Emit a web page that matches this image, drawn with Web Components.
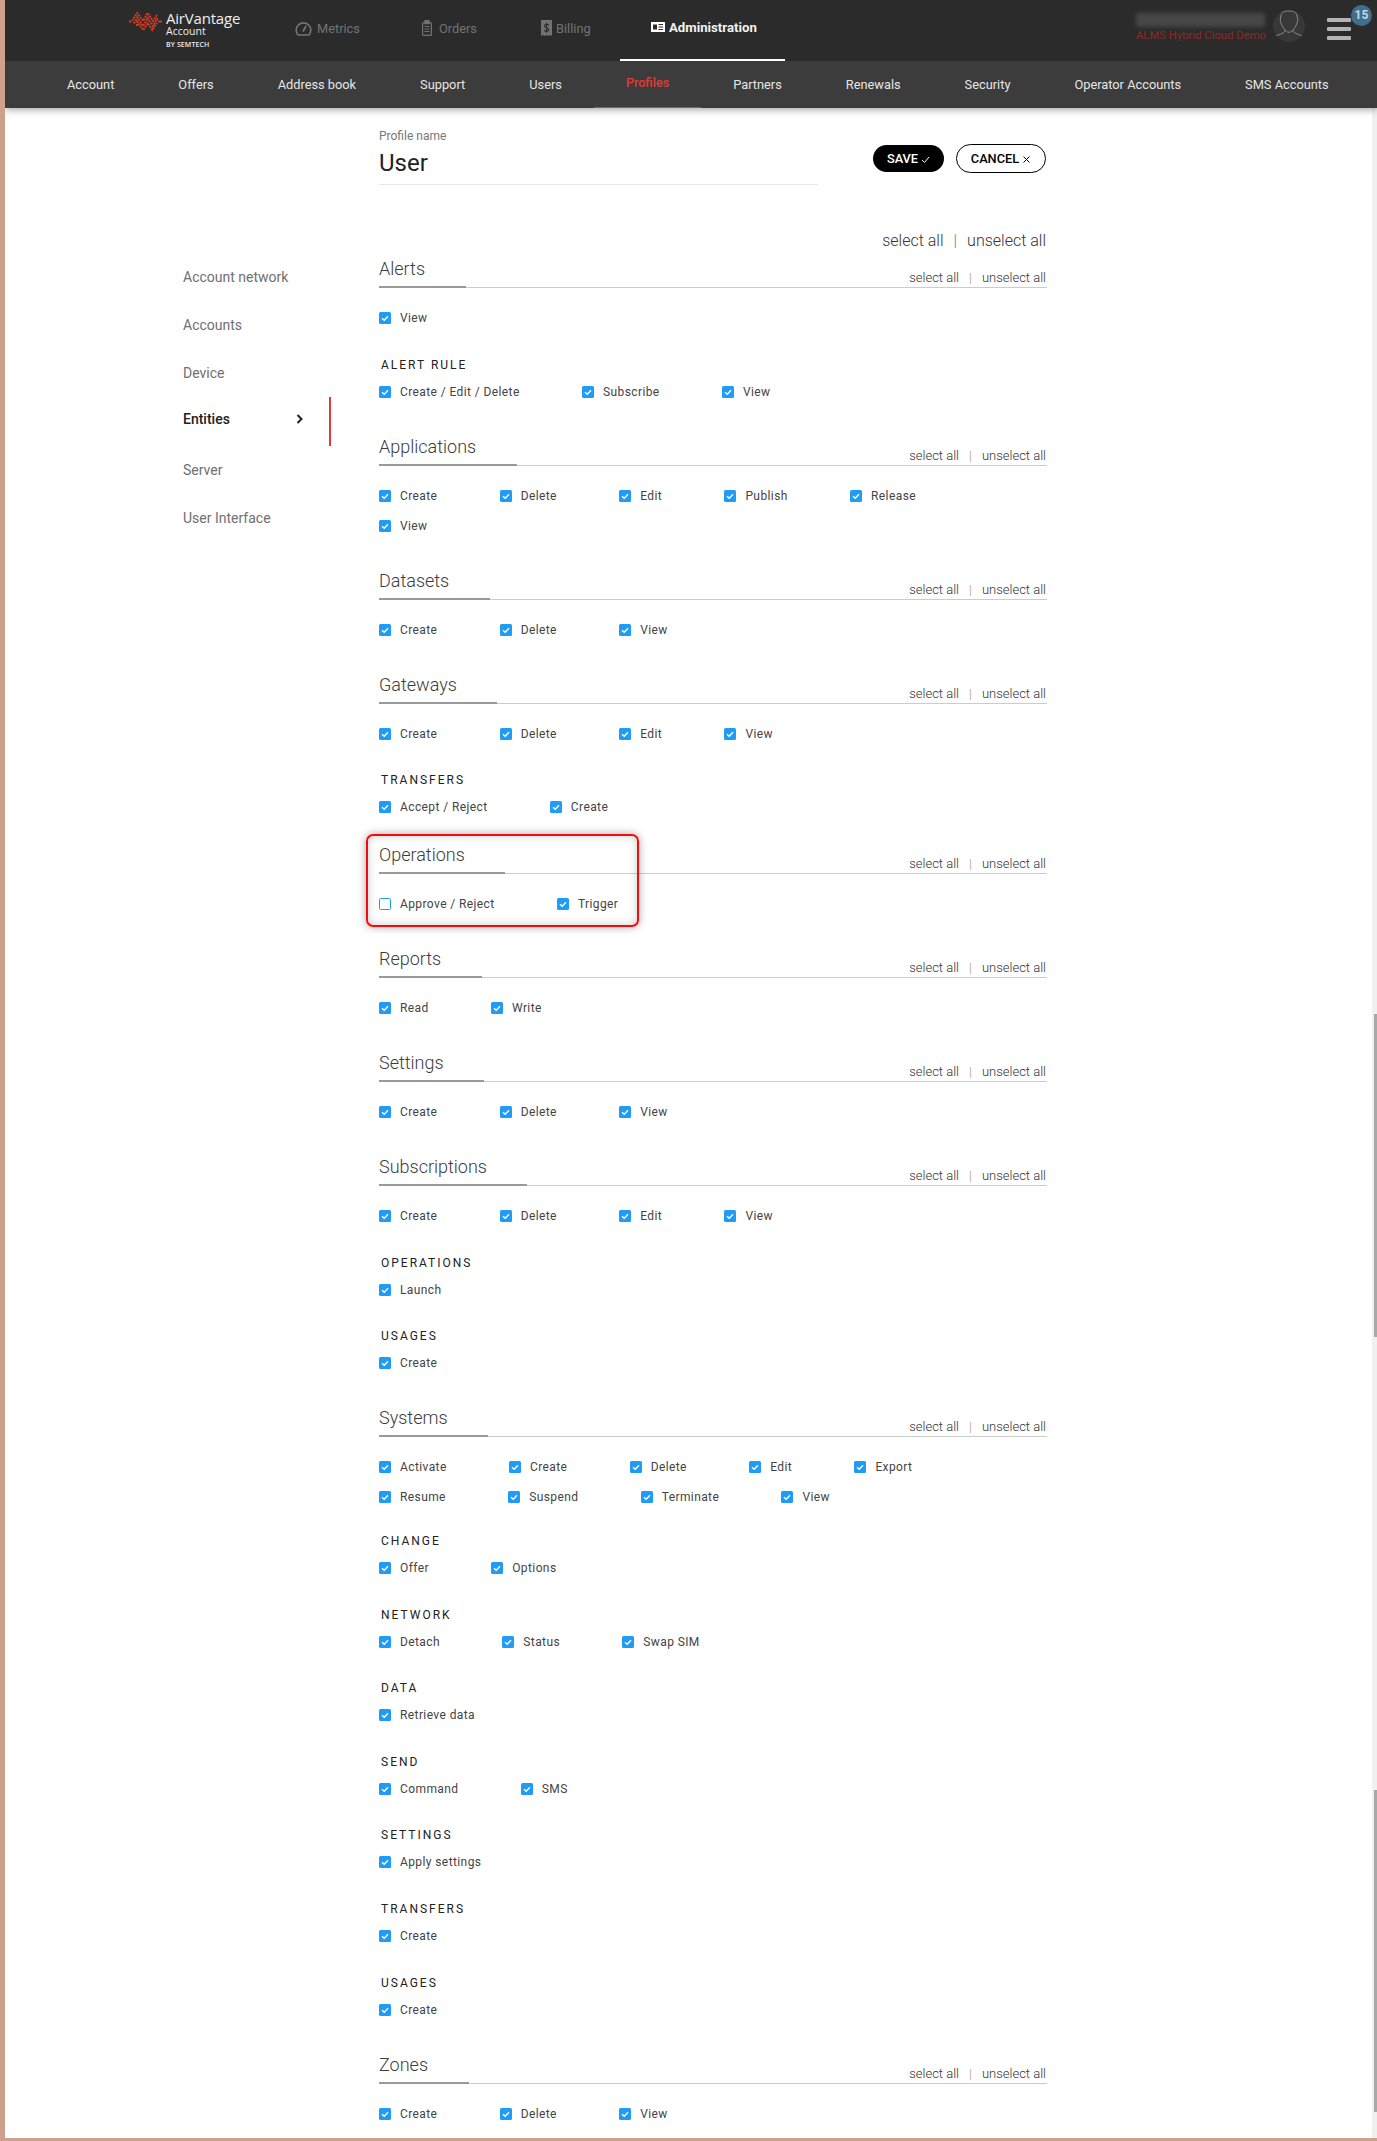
<!DOCTYPE html>
<html lang="en"><head><meta charset="utf-8"><title>AirVantage Profile</title>
<style>
html,body{margin:0;padding:0;background:#fff;font-family:Roboto,"Liberation Sans",sans-serif;overflow:hidden}
</style></head><body>
<av-page>
  <av-topbar slot="top"></av-topbar>
  <av-subnav slot="top">
    <av-tab>Account</av-tab><av-tab>Offers</av-tab><av-tab>Address book</av-tab><av-tab>Support</av-tab><av-tab>Users</av-tab><av-tab active>Profiles</av-tab><av-tab>Partners</av-tab><av-tab>Renewals</av-tab><av-tab>Security</av-tab><av-tab>Operator Accounts</av-tab><av-tab>SMS Accounts</av-tab>
  </av-subnav>
  <av-sidebar slot="side">
    <av-side-item>Account network</av-side-item>
    <av-side-item>Accounts</av-side-item>
    <av-side-item>Device</av-side-item>
    <av-side-item active>Entities</av-side-item>
    <av-side-item>Server</av-side-item>
    <av-side-item>User Interface</av-side-item>
  </av-sidebar>
  <av-profile-head></av-profile-head>
  <av-select big></av-select>

  <av-section name="Alerts" gap="-2">
    <av-row><av-check>View</av-check></av-row>
    <av-group name="ALERT RULE"><av-check>Create / Edit / Delete</av-check><av-check>Subscribe</av-check><av-check>View</av-check></av-group>
  </av-section>
  <av-section name="Applications">
    <av-row><av-check>Create</av-check><av-check>Delete</av-check><av-check>Edit</av-check><av-check>Publish</av-check><av-check>Release</av-check><av-check>View</av-check></av-row>
  </av-section>
  <av-section name="Datasets">
    <av-row><av-check>Create</av-check><av-check>Delete</av-check><av-check>View</av-check></av-row>
  </av-section>
  <av-section name="Gateways">
    <av-row><av-check>Create</av-check><av-check>Delete</av-check><av-check>Edit</av-check><av-check>View</av-check></av-row>
    <av-group name="TRANSFERS"><av-check>Accept / Reject</av-check><av-check>Create</av-check></av-group>
  </av-section>
  <av-section name="Operations" gap="21" highlight>
    <av-row><av-check off>Approve / Reject</av-check><av-check>Trigger</av-check></av-row>
  </av-section>
  <av-section name="Reports">
    <av-row><av-check>Read</av-check><av-check>Write</av-check></av-row>
  </av-section>
  <av-section name="Settings">
    <av-row><av-check>Create</av-check><av-check>Delete</av-check><av-check>View</av-check></av-row>
  </av-section>
  <av-section name="Subscriptions">
    <av-row><av-check>Create</av-check><av-check>Delete</av-check><av-check>Edit</av-check><av-check>View</av-check></av-row>
    <av-group name="OPERATIONS"><av-check>Launch</av-check></av-group>
    <av-group name="USAGES"><av-check>Create</av-check></av-group>
  </av-section>
  <av-section name="Systems">
    <av-row><av-check>Activate</av-check><av-check>Create</av-check><av-check>Delete</av-check><av-check>Edit</av-check><av-check>Export</av-check><av-check>Resume</av-check><av-check>Suspend</av-check><av-check>Terminate</av-check><av-check>View</av-check></av-row>
    <av-group name="CHANGE" tight><av-check>Offer</av-check><av-check>Options</av-check></av-group>
    <av-group name="NETWORK"><av-check>Detach</av-check><av-check>Status</av-check><av-check>Swap SIM</av-check></av-group>
    <av-group name="DATA"><av-check>Retrieve data</av-check></av-group>
    <av-group name="SEND"><av-check>Command</av-check><av-check>SMS</av-check></av-group>
    <av-group name="SETTINGS"><av-check>Apply settings</av-check></av-group>
    <av-group name="TRANSFERS"><av-check>Create</av-check></av-group>
    <av-group name="USAGES"><av-check>Create</av-check></av-group>
  </av-section>
  <av-section name="Zones">
    <av-row><av-check>Create</av-check><av-check>Delete</av-check><av-check>View</av-check></av-row>
  </av-section>
  <av-scrollbar slot="scroll"></av-scrollbar>
</av-page>
<script>
function def(name, css, html, extra){
  customElements.define(name, class extends HTMLElement{
    constructor(){super();this.attachShadow({mode:'open'});}
    connectedCallback(){
      if(this.shadowRoot.firstChild) return;
      const h = typeof html==='function'?html(this):html;
      this.shadowRoot.innerHTML='<style>'+css+'</style>'+h;
      if(extra) extra(this);
    }
  });
}
def('av-page',`
:host{display:flex;flex-direction:column;box-sizing:border-box;width:1377px;height:2141px;border-left:5px solid #cfa18c;border-bottom:3px solid #cfa18c;overflow:hidden;background:#fff}
.top{position:relative;z-index:2;box-shadow:0 2px 7px rgba(0,0,0,.35)}
.body{flex:1;display:flex;min-height:0}
.left{width:178px}
.side{width:148px;padding-top:145px}
.main{width:668px;margin-left:48px;flex:none}
.sp{flex:1}
`,`<div class="top"><slot name="top"></slot></div>
<div class="body"><div class="left"></div><div class="side"><slot name="side"></slot></div><div class="main"><slot></slot></div><div class="sp"></div><slot name="scroll"></slot></div>`);

def('av-topbar',`
:host{display:flex;align-items:flex-start;height:61px;background:#2b2b2b;position:relative;font-size:12.8px;color:#737373}
.logo{display:flex;margin-left:124px;width:166px;padding-top:10px;box-sizing:border-box;flex:none}
.mark{margin-top:2px;width:38px;flex:none}
.lt{color:#eee;line-height:1;margin-left:-1px}
.a1{font:400 15px/16px "Open Sans",Roboto,sans-serif;letter-spacing:-.2px}
.a2{font:400 10.5px/11px "Open Sans",Roboto,sans-serif;margin-top:0px}
.a3{font:600 7px/9px "Open Sans",Roboto,sans-serif;margin-top:3px;letter-spacing:.1px}
.nav{display:flex;height:61px}
.it{display:flex;align-items:center;gap:5px;height:56px;}
.it svg{display:block;flex:none}
.m{width:127px}.o{width:119px;gap:7px}.b{width:79px;gap:4px}
.ad{width:165px;box-sizing:border-box;height:61px;padding:0 0 5px 31px;border-bottom:2px solid #fff;color:#f2f2f2;font-weight:700;font-size:13.2px;gap:4px}
.sp{flex:1}
.usr{width:129px;margin-right:8px;padding-top:13px;flex:none}
.blur{height:14px;background:#474747;filter:blur(2px);border-radius:2px}
.org{font-size:11.3px;line-height:16px;color:#8c2a2a;margin-top:1px;white-space:nowrap}
.ava{width:32px;height:32px;border-radius:50%;background:#383838;margin:10px 0 0 0;flex:none;overflow:hidden}
.ham{position:relative;width:24px;margin:18px 26px 0 22px;height:22px;flex:none;display:flex;flex-direction:column;justify-content:space-between}
.ham i{display:block;height:4px;background:#b3b3b3;border-radius:1px}
.badge{position:absolute;left:24px;top:-13px;width:21px;height:21px;border-radius:50%;background:#3d6f8e;color:#c9d3da;font:700 12px/21px Roboto,sans-serif;text-align:center}
`,`<div class="logo"><div class="mark"><svg width="34" height="20" viewBox="0 0 34 20" fill="none" stroke="#d8391f" stroke-width="2" stroke-dasharray="2 .9"><path d="M0 9.500h2M31 9.500h2"/><path d="M3 9 L8.300 1 L14 9 L18.700 1 L24 9 L28 3"/><path d="M5 11.500 L8.300 5.500 L14 14 L18.700 6 L24 14 L28 7 L31 10.500"/><path d="M8 14 L8.300 10 L14.300 18 L18.700 11 L23.300 18 L28 11"/></svg></div>
<div class="lt"><div class="a1">AirVantage</div><div class="a2">Account</div><div class="a3">BY SEMTECH</div></div></div>
<div class="nav">
<div class="it m"><svg width="17" height="15" viewBox="0 0 17 15" fill="none" stroke="#737373" stroke-width="1.6"><path d="M3 14 A7.300 7.300 0 1 1 14 14 Z"/><path d="M8 10.500L11 5" stroke-width="1.800"/></svg><span>Metrics</span></div>
<div class="it o"><svg width="10" height="16" viewBox="0 0 10 16" fill="none" stroke="#737373" stroke-width="1.200"><rect x=".6" y="2.600" width="8.800" height="12.800" rx="1"/><rect x="3" y=".6" width="4" height="3" fill="#737373"/><path d="M2.500 6.500h5M2.500 9h5M2.500 11.500h5"/></svg><span>Orders</span></div>
<div class="it b"><svg width="11" height="17" viewBox="0 0 11 17"><path d="M0 0h11v16l-1.800-1-1.800 1-1.900-1-1.900 1-1.800-1L0 16z" fill="#737373"/><path d="M7.800 5.300C7 4 3.500 4 3.500 6 3.500 8.300 7.800 7.300 7.800 9.800 7.800 11.800 4 11.800 3.200 10.300M5.500 2.800v10" stroke="#2b2b2b" stroke-width="1.100" fill="none"/></svg><span>Billing</span></div>
<div class="it ad"><svg width="14" height="10" viewBox="0 0 14 10"><path d="M0 0h14v10H0z" fill="#fff"/><path d="M2 2.500h4v5H2z" fill="#2b2b2b"/><path d="M7.500 2.500h4.500M7.500 5h4.500M7.500 7.500h4.500" stroke="#2b2b2b" stroke-width="1"/></svg><span>Administration</span></div>
</div>
<div class="sp"></div>
<div class="usr"><div class="blur"></div><div class="org">ALMS Hybrid Cloud Demo</div></div>
<div class="ava"><svg width="32" height="32" viewBox="0 0 32 32" fill="none" stroke="#8a8a8a" stroke-width="1"><path d="M16 1c-5 0-8 1-8 5-1 3-1 5 0 7 1 3 3 6 4 7 0 2-1 2.500-3 3.500-2 1-5 1.500-7 3M16 1c5 0 8 2 8 5 1 3 1 5 0 7-1 3-3 6-4 7 0 2 1 2.500 3 3.500 2 1 5 1.500 7 3M12 20c2 3 6 3 8 0"/></svg></div>
<div class="ham"><i></i><i></i><i></i><div class="badge">15</div></div>`);

def('av-subnav',`:host{display:flex;height:47px;background:#3c3c3c;padding-left:30px}`,`<slot></slot>`);
def('av-tab',`
:host{display:block;box-sizing:border-box;height:47px;padding:0 32px;font-size:12.8px;line-height:47px;color:#e6e6e6;white-space:nowrap}
:host([active]){color:#e53935;font-weight:500;font-size:12.6px;line-height:44px;border-bottom:1px solid #e53935}
`,`<slot></slot>`);

def('av-sidebar',`:host{display:block}`,`<slot></slot>`);
def('av-side-item',`
:host{display:block;box-sizing:border-box;height:48px;font-size:14px;font-weight:400;line-height:48px;color:#6f6f6f;position:relative}
:host([active]){height:49px;line-height:44px;color:#222;font-weight:500;border-right:2px solid #e53935}
svg{position:absolute;left:113px;top:17px}
`,(el)=>`<slot></slot>`+(el.hasAttribute('active')?`<svg width="8" height="10" viewBox="0 0 8 10" fill="none" stroke="#222" stroke-width="2"><path d="M1.500 1L5.500 5L1.500 9"/></svg>`:''));

def('av-profile-head',`
:host{display:flex;align-items:flex-start;height:92px}
.f{width:439px;box-sizing:border-box;height:77px;border-bottom:1px solid #e6e6e6;flex:none;}
.l{font-size:12px;line-height:14px;color:#777;margin-top:21px}
.v{font-size:24px;line-height:28px;color:#222;font-weight:400;margin-top:6px}
.sp{flex:1}
.btns{display:flex;gap:12px;margin-top:36px;align-items:center;padding-right:1px}
button{all:unset;box-sizing:border-box;font:500 12.8px/1 Roboto,sans-serif;border-radius:15px;display:flex;align-items:center;justify-content:center;gap:3px;padding-top:1px}
.s{width:71px;height:27px;background:#000;color:#fff}
.c{width:90px;height:29px;background:#fff;color:#000;border:1px solid #000}
`,`<div class="f"><div class="l">Profile name</div><div class="v">User</div></div><div class="sp"></div>
<div class="btns"><button class="s">SAVE<svg width="9" height="9" viewBox="0 0 9 9" fill="none" stroke="#fff" stroke-width="1"><path d="M1 5L3.500 7.500L8 2"/></svg></button><button class="c">CANCEL<svg width="9" height="9" viewBox="0 0 9 9" fill="none" stroke="#000" stroke-width="1"><path d="M1.500 1.500L7.500 7.500M7.500 1.500L1.500 7.500"/></svg></button></div>`);

def('av-select',`
:host{display:flex;justify-content:flex-end;font-size:13px;font-weight:300;color:#333;line-height:16px;padding-right:1px}
:host([big]){font-size:16px;line-height:20px;height:28px;margin-top:31px}
span.b{color:#c88b5a;margin:0 10px}
:host([big]) span.b{color:#777;margin:0 10px}
`,`<span>select all</span><span class="b">|</span><span>unselect all</span>`);

def('av-section',`
:host{display:block;position:relative;margin-top:var(--gap,28px)}
.head{display:flex;justify-content:space-between;align-items:flex-end;height:30px;border-bottom:1px solid #ccc}
.t{font-size:18px;font-weight:300;line-height:24px;color:#3c3c3c;padding:0 40.5px 5px 0;border-bottom:2px solid #999;margin-bottom:-1px}
.sel{padding-bottom:1px}
.body{padding-top:15px}
.hl{position:absolute;left:-13px;top:-9px;width:273px;height:93px;box-sizing:border-box;border:2px solid #f20d0d;border-radius:7px;box-shadow:0 0 9px rgba(0,0,0,.35),inset 0 0 9px rgba(0,0,0,.2);pointer-events:none}
`,(el)=>{const n=el.getAttribute('name');if(el.hasAttribute('gap'))el.style.setProperty('--gap',el.getAttribute('gap')+'px');
return `<div class="head"><div class="t">${n}</div><av-select class="sel"></av-select></div><div class="body"><slot></slot></div>`+(el.hasAttribute('highlight')?'<div class="hl"></div>':'');});

def('av-row',`:host{display:flex;flex-wrap:wrap;max-width:610px}`,`<slot></slot>`);
def('av-group',`
:host{display:block;margin-top:23.6px}
:host([tight]){margin-top:20.6px}
.h{font-size:12px;line-height:16px;letter-spacing:2px;color:#222;padding-left:2px;margin-bottom:4px}
`,(el)=>`<div class="h">${el.getAttribute('name')}</div><av-row><slot></slot></av-row>`);
def('av-check',`
:host{display:flex;align-items:center;height:30px;margin-right:62.300px;font-size:12px;color:#444;letter-spacing:.4px;white-space:nowrap}
.b{width:12px;height:12px;border-radius:1.5px;background:#209cf6;margin-right:9px;flex:none;box-sizing:border-box}
.b svg{display:block}
:host([off]) .b{background:#fff;border:1px solid #209cf6}
`,(el)=>`<div class="b">${el.hasAttribute('off')?'':'<svg width="12" height="12" viewBox="0 0 12 12" fill="none" stroke="#fff" stroke-width="1.400"><path d="M3 6.200L5.200 8.200L9 4.200"/></svg>'}</div><slot></slot>`);
def('av-scrollbar',`
:host{display:flex;flex-direction:column;width:5px;background:#f0f0f0;align-items:flex-end;flex:none}
i{display:block;width:3px;background:#a9a9a9}
.a{margin-top:906px;height:323px}.b{margin-top:453px;height:322px}
`,`<i class="a"></i><i class="b"></i>`);
</script>
</body></html>
